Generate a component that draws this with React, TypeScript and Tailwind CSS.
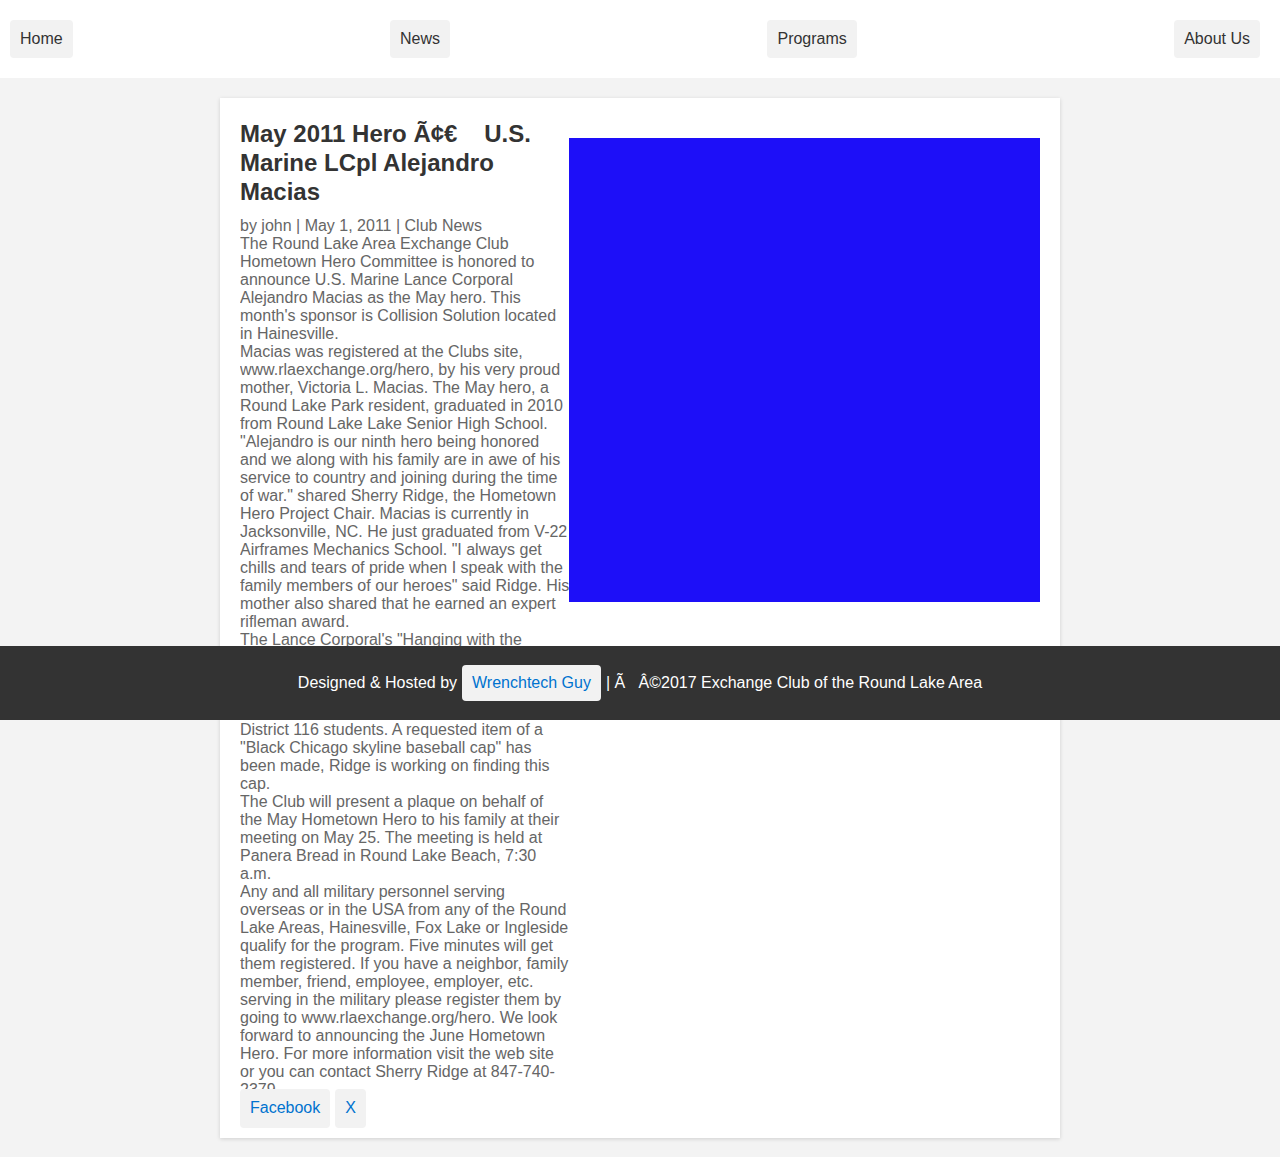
export default function App() {
  const navItems = ['Home', 'News', 'Programs', 'About Us'];

  return (
    <div className="relative min-h-screen bg-[#f3f3f3] font-['Liberation_Sans',Arial,sans-serif] text-base">
      <header className="bg-white pl-[10px] pr-[20px] py-5 flex justify-between">
        {navItems.map((item) => (
          <a
            key={item}
            href="#"
            className="bg-[#f2f2f2] text-[#333] rounded px-[10px] py-[10px] leading-[1.15]"
          >
            {item}
          </a>
        ))}
      </header>

      <main className="py-5">
        <article className="w-[840px] mx-auto bg-white shadow-[0_1px_4px_rgba(0,0,0,0.15)] px-5 pt-5 pb-[10px]">
          <div className="flex h-[971px]">
            <div className="w-[329.5px] shrink-0 overflow-hidden text-[#666] leading-[18px] pt-[2px]">
              <h1 className="text-2xl font-bold text-[#333] leading-[1.2] mb-[10px]">
                May 2011 Hero Ã¢€{'\u00a0\u00a0\u00a0'} U.S. Marine LCpl Alejandro Macias
              </h1>
              <p>by john | May 1, 2011 | Club News</p>
              <p>
                The Round Lake Area Exchange Club Hometown Hero Committee is honored to announce U.S. Marine Lance
                Corporal Alejandro Macias as the May hero. This month's sponsor is Collision Solution located in
                Hainesville.
              </p>
              <p>
                Macias was registered at the Clubs site, www.rlaexchange.org/hero, by his very proud mother, Victoria
                L. Macias. The May hero, a Round Lake Park resident, graduated in 2010 from Round Lake Lake Senior High
                School. "Alejandro is our ninth hero being honored and we along with his family are in awe of his
                service to country and joining during the time of war." shared Sherry Ridge, the Hometown Hero Project
                Chair. Macias is currently in Jacksonville, NC. He just graduated from V-22 Airframes Mechanics School.
                "I always get chills and tears of pride when I speak with the family members of our heroes" said Ridge.
                His mother also shared that he earned an expert rifleman award.
              </p>
              <p>
                The Lance Corporal's "Hanging with the Hometown Hero" care package will be sent soon and will hold
                letters of thanks and support written by the young people of Round Lake Area Schools Community Unit
                School District 116 students. A requested item of a "Black Chicago skyline baseball cap" has been
                made, Ridge is working on finding this cap.
              </p>
              <p>
                The Club will present a plaque on behalf of the May Hometown Hero to his family at their meeting on
                May 25. The meeting is held at Panera Bread in Round Lake Beach, 7:30 a.m.
              </p>
              <p>
                Any and all military personnel serving overseas or in the USA from any of the Round Lake Areas,
                Hainesville, Fox Lake or Ingleside qualify for the program. Five minutes will get them registered. If
                you have a neighbor, family member, friend, employee, employer, etc. serving in the military please
                register them by going to www.rlaexchange.org/hero. We look forward to announcing the June Hometown
                Hero. For more information visit the web site or you can contact Sherry Ridge at 847-740-2379.
              </p>
            </div>
            <div className="flex-1 pt-5">
              <div className="w-[471px] h-[464px] -ml-px bg-[#1d0ff8]" />
            </div>
          </div>

          <div className="flex gap-[5px]">
            <a href="#" className="bg-[#f2f2f2] text-[#0073cf] rounded px-[10px] py-[10px] leading-[1.15]">
              Facebook
            </a>
            <a href="#" className="bg-[#f2f2f2] text-[#0073cf] rounded px-[10px] py-[10px] leading-[1.15]">
              X
            </a>
          </div>
        </article>
      </main>

      <footer className="absolute left-0 right-0 top-[646px] h-[74px] bg-[#333] text-white flex items-center justify-center leading-[1.15]">
        <span>Designed &amp; Hosted by</span>
        <a href="#" className="ml-[5px] mr-[5px] bg-[#f2f2f2] text-[#0073cf] rounded px-[10px] py-[9px]">
          Wrenchtech Guy
        </a>
        <span>| Ã{'\u00a0\u00a0\u00a0'}Â©2017 Exchange Club of the Round Lake Area</span>
      </footer>
    </div>
  );
}
